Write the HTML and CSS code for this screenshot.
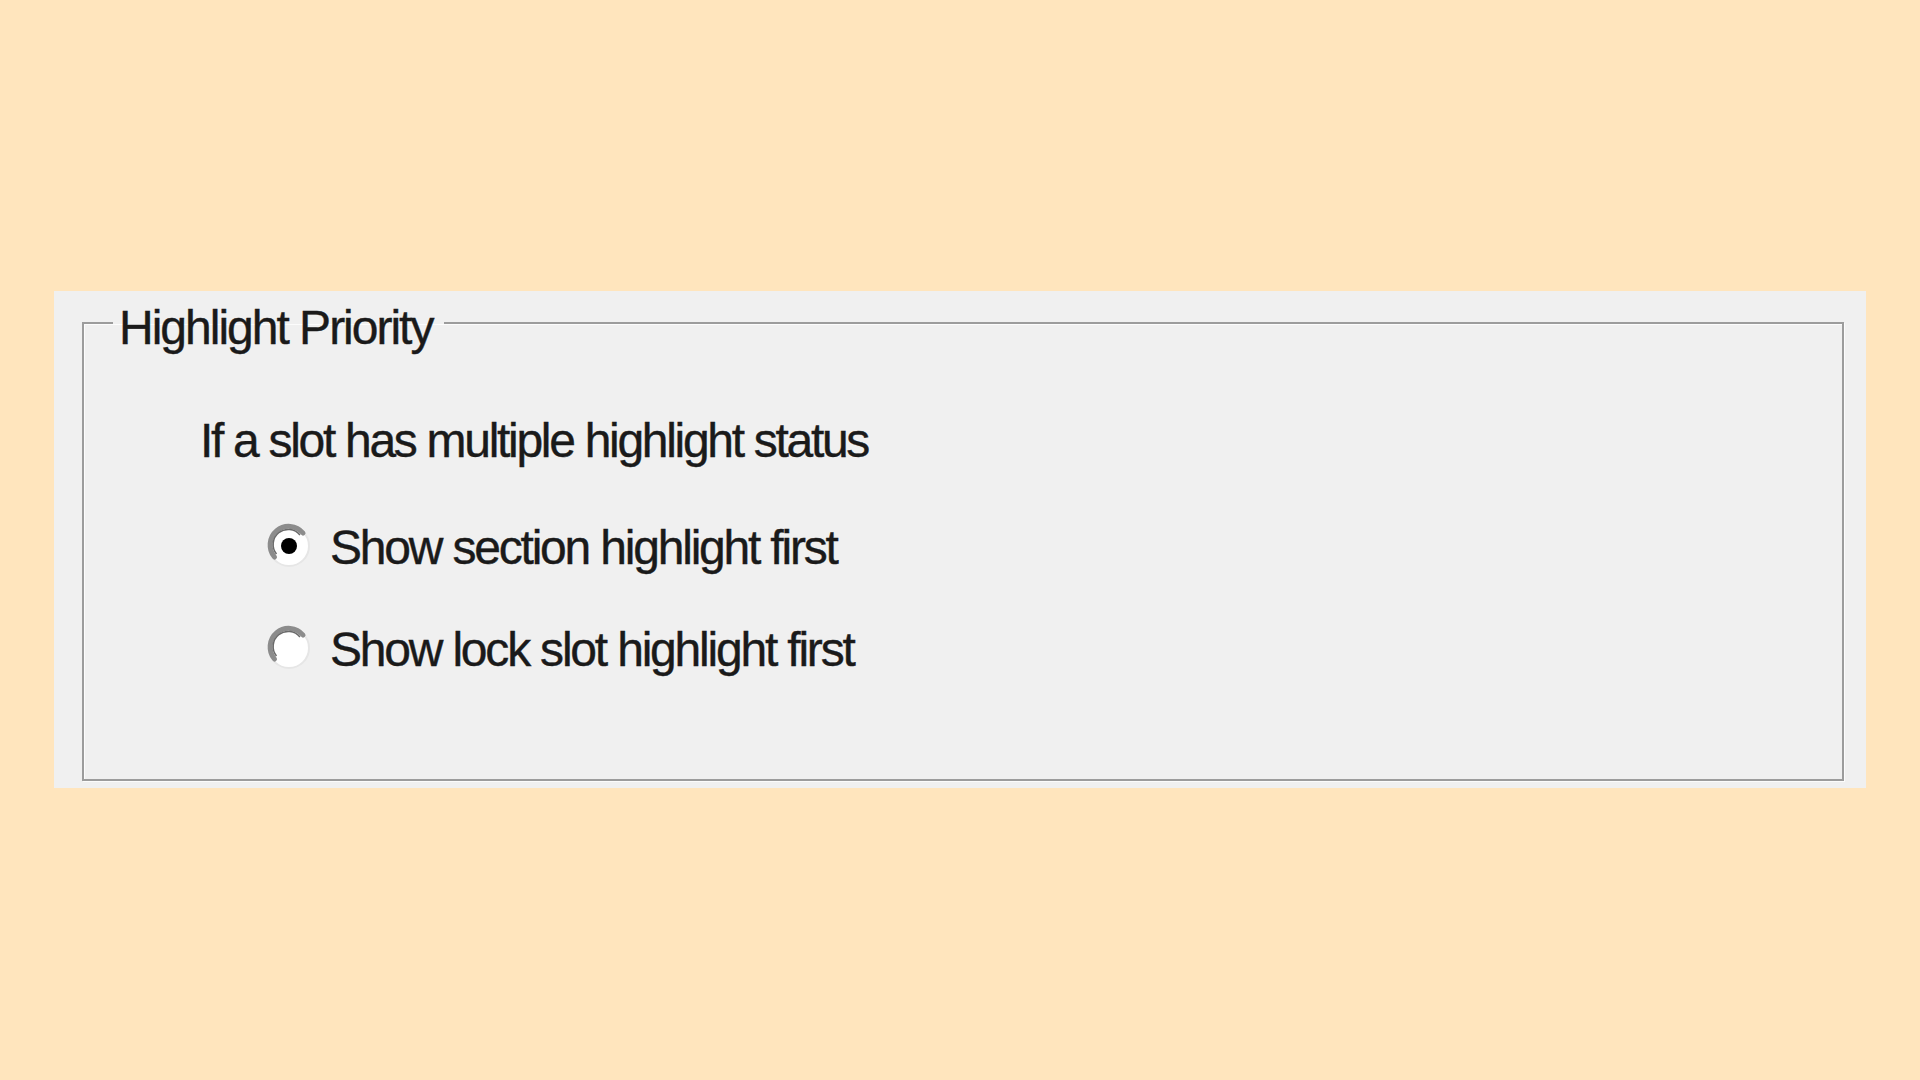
FILE: index.html
```html
<!DOCTYPE html>
<html lang="en">
<head>
<meta charset="utf-8">
<title>Highlight Priority</title>
<link rel="stylesheet" href="styles.css">
</head>
<body>
<div class="page">
  <div class="panel">
    <fieldset class="group">
      <legend class="group-title">Highlight Priority</legend>
      <div class="group-body">
        <p class="prompt">If a slot has multiple highlight status</p>
        <div class="options">
          <label class="option">
            <svg class="radio" viewBox="0 0 46 46" width="46" height="46">
              <circle cx="23" cy="23" r="20" fill="#ffffff" stroke="#e6e6e6" stroke-width="2"/>
              <path d="M8.5 34 A18 18 0 0 1 37 10" fill="none" stroke="#8c8c8c" stroke-width="5" stroke-linecap="round"/>
              <path d="M10.5 31 A15 15 0 0 1 34 12" fill="none" stroke="#6a6a6a" stroke-width="1.5"/>
              <circle cx="23" cy="23" r="8" fill="#000000"/>
            </svg>
            <span class="option-text">Show section highlight first</span>
          </label>
          <label class="option">
            <svg class="radio" viewBox="0 0 46 46" width="46" height="46">
              <circle cx="23" cy="23" r="20" fill="#ffffff" stroke="#e6e6e6" stroke-width="2"/>
              <path d="M8.5 34 A18 18 0 0 1 37 10" fill="none" stroke="#8c8c8c" stroke-width="5" stroke-linecap="round"/>
              <path d="M10.5 31 A15 15 0 0 1 34 12" fill="none" stroke="#6a6a6a" stroke-width="1.5"/>
            </svg>
            <span class="option-text">Show lock slot highlight first</span>
          </label>
        </div>
      </div>
    </fieldset>
  </div>
</div>
</body>
</html>
```
FILE: styles.css
```css
html, body {
  margin: 0;
  padding: 0;
}

body {
  background: #ffe5bd;
  width: 1920px;
  height: 1080px;
  font-family: "Liberation Sans", Arial, sans-serif;
  color: #1a1a1a;
}

.page {
  padding: 291px 0 0 54px;
}

.panel {
  width: 1812px;
  height: 497px;
  box-sizing: border-box;
  background: #f0f0f0;
  padding: 2px 22px 7px 28px;
}

.group {
  margin: 0;
  padding: 0;
  height: 100%;
  box-sizing: border-box;
  border: 2px solid #9c9c9c;
  box-shadow: inset 1px 1px 0 #fcfcfc, 1px 1px 0 #fcfcfc;
}

.group-title {
  margin-left: 29px;
  padding: 11px 12px 0 6px;
  font-size: 48px;
  line-height: 48px;
  letter-spacing: -2px;
  -webkit-text-stroke: 0.4px #1a1a1a;
}

.group-body {
  padding: 59px 0 0 116px;
}

.prompt {
  margin: 0;
  font-size: 48px;
  line-height: 60px;
  letter-spacing: -2.3px;
  -webkit-text-stroke: 0.4px #1a1a1a;
}

.options {
  display: flex;
  flex-direction: column;
  gap: 42px;
  margin-top: 47px;
  padding-left: 66px;
}

.option {
  display: flex;
  align-items: center;
  height: 60px;
}

.radio {
  flex: none;
  width: 46px;
  height: 46px;
  margin: 0 18px 5px 0;
}

.option-text {
  font-size: 48px;
  line-height: 60px;
  letter-spacing: -2.2px;
  -webkit-text-stroke: 0.4px #1a1a1a;
}
```
